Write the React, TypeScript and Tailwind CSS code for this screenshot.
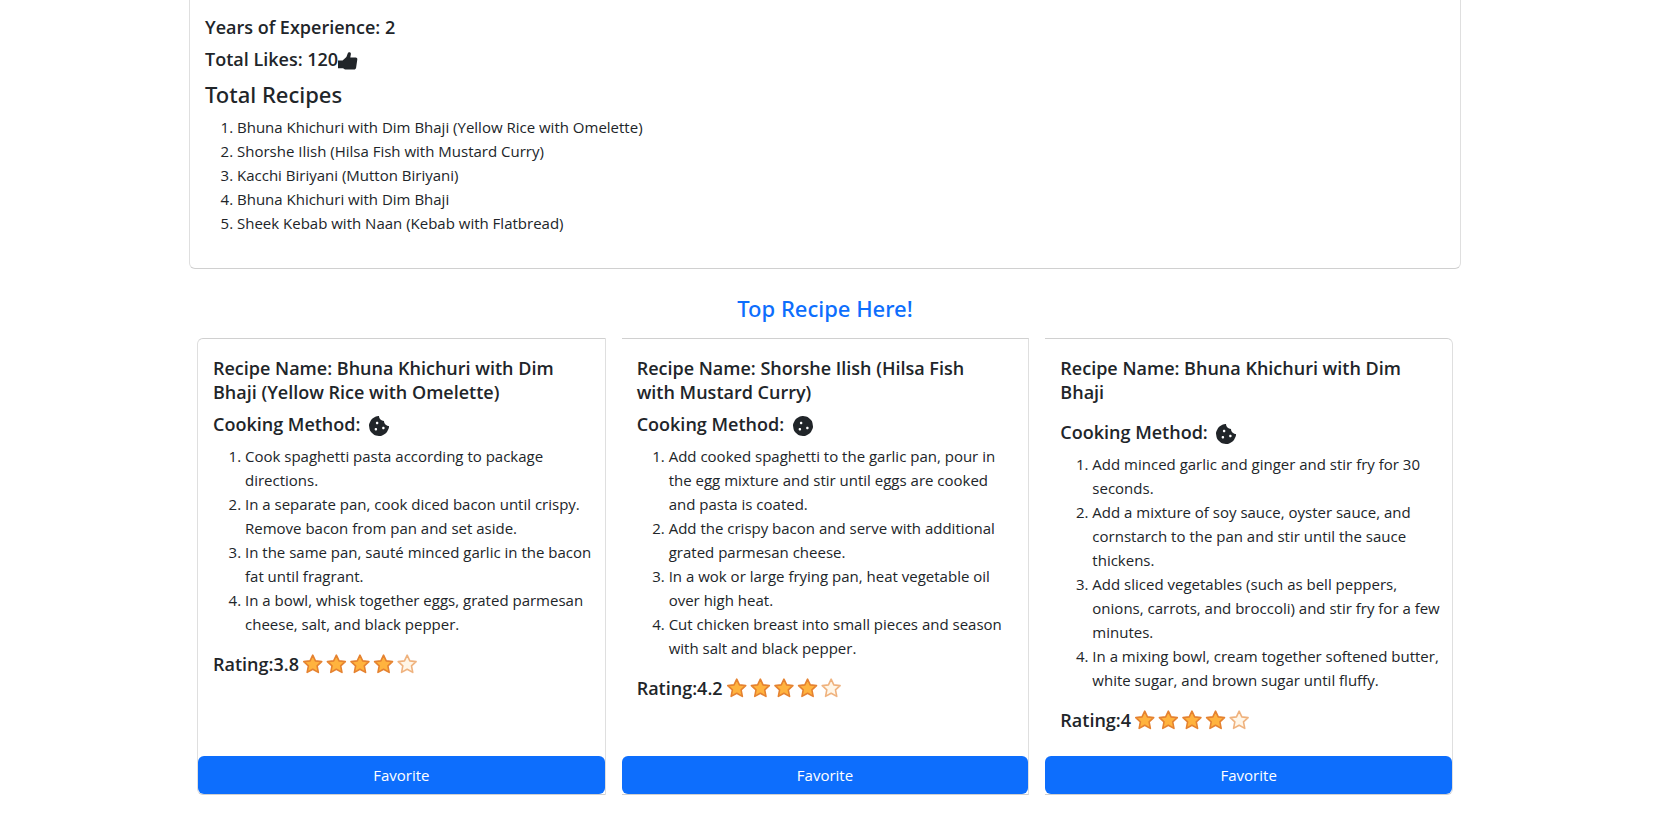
import { Fragment } from "react";
import { FaCookie, FaCookieBite } from "react-icons/fa";

type Recipe = {
  name: string[];
  icon: "bite" | "whole";
  steps: string[][];
  rating: string;
  short?: boolean;
};

const totalRecipes = [
  "Bhuna Khichuri with Dim Bhaji (Yellow Rice with Omelette)",
  "Shorshe Ilish (Hilsa Fish with Mustard Curry)",
  "Kacchi Biriyani (Mutton Biriyani)",
  "Bhuna Khichuri with Dim Bhaji",
  "Sheek Kebab with Naan (Kebab with Flatbread)",
];

const recipes: Recipe[] = [
  {
    name: ["Recipe Name: Bhuna Khichuri with Dim", "Bhaji (Yellow Rice with Omelette)"],
    icon: "bite",
    steps: [
      ["Cook spaghetti pasta according to package", "directions."],
      ["In a separate pan, cook diced bacon until crispy.", "Remove bacon from pan and set aside."],
      ["In the same pan, sauté minced garlic in the bacon", "fat until fragrant."],
      ["In a bowl, whisk together eggs, grated parmesan", "cheese, salt, and black pepper."],
    ],
    rating: "3.8",
  },
  {
    name: ["Recipe Name: Shorshe Ilish (Hilsa Fish", "with Mustard Curry)"],
    icon: "whole",
    steps: [
      ["Add cooked spaghetti to the garlic pan, pour in", "the egg mixture and stir until eggs are cooked", "and pasta is coated."],
      ["Add the crispy bacon and serve with additional", "grated parmesan cheese."],
      ["In a wok or large frying pan, heat vegetable oil", "over high heat."],
      ["Cut chicken breast into small pieces and season", "with salt and black pepper."],
    ],
    rating: "4.2",
  },
  {
    name: ["Recipe Name: Bhuna Khichuri with Dim", "Bhaji"],
    icon: "bite",
    short: true,
    steps: [
      ["Add minced garlic and ginger and stir fry for 30", "seconds."],
      ["Add a mixture of soy sauce, oyster sauce, and", "cornstarch to the pan and stir until the sauce", "thickens."],
      ["Add sliced vegetables (such as bell peppers,", "onions, carrots, and broccoli) and stir fry for a few", "minutes."],
      ["In a mixing bowl, cream together softened butter,", "white sugar, and brown sugar until fluffy."],
    ],
    rating: "4",
  },
];

function Lines({ lines }: { lines: string[] }) {
  return (
    <>
      {lines.map((line, i) => (
        <Fragment key={line}>
          {i > 0 && <br />}
          {line}
        </Fragment>
      ))}
    </>
  );
}

function ThumbIcon() {
  return (
    <svg viewBox="0 0 20 18" className="inline-block h-[18px] w-5 align-middle" fill="currentColor" aria-hidden="true">
      <path d="M0 8.4h4.6L8.4 5l1.3-3.4C10.1.5 10.9 0 11.7.2c1 .2 1.3 1 1.2 1.900l-.6 3.500h5.300c1.200 0 1.900.9 1.700 2l-1.200 8.200c-.2 1.100-1 1.800-2.100 1.800H8.200c-1.200 0-2.200-.5-3.100-1.300H0z" />
    </svg>
  );
}

const starOffsets = [0, 23.6, 47.2, 70.8, 94.4];

function Stars({ filled }: { filled: number }) {
  return (
    <svg viewBox="0 0 115 20" className="ml-1 h-5 w-[115px]" role="img" aria-label={`${filled} of 5 stars`}>
      {starOffsets.map((x, i) => (
        <path
          key={x}
          transform={`translate(${x} 0)`}
          d="M9.75 1.100l2.700 5.750 6.250.75-4.600 4.350 1.250 6.400-5.600-3.150-5.600 3.150 1.250-6.400L.8 7.600l6.250-.75z"
          fill="#ffb33e"
          fillOpacity={i < filled ? 1 : 0.12}
          stroke="#e58230"
          strokeOpacity={i < filled ? 1 : 0.6}
          strokeWidth="1.6"
          strokeLinejoin="round"
        />
      ))}
    </svg>
  );
}

const edges = ["rounded-l-md border-l", "", "rounded-r-md"];

function RecipeCard({ recipe, edge }: { recipe: Recipe; edge: string }) {
  const Cookie = recipe.icon === "bite" ? FaCookieBite : FaCookie;
  return (
    <article className={`flex min-w-0 flex-1 flex-col border-y border-r border-x-[#dfdfdf] border-y-[#d0d0d0] ${edge}`}>
      <div className="flex-1 px-[15px] pb-6 pt-[17px]">
        <h5 className={`text-lg leading-6 font-semibold whitespace-nowrap ${recipe.short ? "mb-4" : "mb-2"}`}>
          <Lines lines={recipe.name} />
        </h5>
        <h5 className="mb-2 h-6 text-lg leading-6 font-semibold">
          Cooking Method: <Cookie className="ml-1 inline-block size-5 align-middle" />
        </h5>
        <ol className="mb-4 list-decimal pl-8">
          {recipe.steps.map((step) => (
            <li key={step[0]} className="whitespace-nowrap">
              <Lines lines={step} />
            </li>
          ))}
        </ol>
        <h5 className="flex items-center text-lg leading-6 font-semibold">
          Rating:{recipe.rating}
          <Stars filled={4} />
        </h5>
      </div>
      <button type="button" className="h-[38px] w-full rounded-md bg-[#0d6efd] text-white">
        Favorite
      </button>
    </article>
  );
}

export default function App() {
  return (
    <main className="bg-white pr-[27px] font-['Open_Sans','Noto_Sans',sans-serif] text-[15px] leading-6 text-[#212529]">
      <div className="mx-auto max-w-[1272px]">
        <section className="rounded-b-md border-x border-b border-x-[#dfdfdf] border-b-[#d0d0d0] px-[15px] pb-[17px] pt-[15px]">
          <h5 className="mb-2 text-lg leading-6 font-semibold">Years of Experience: 2</h5>
          <h5 className="mb-2 h-6 text-lg leading-6 font-semibold">
            Total Likes: 120
            <ThumbIcon />
          </h5>
          <h4 className="mb-1.5 font-['Noto_Sans','Open_Sans',sans-serif] text-[22px] leading-[30px] font-medium">Total Recipes</h4>
          <ol className="mb-4 list-decimal pl-8">
            {totalRecipes.map((name) => (
              <li key={name}>{name}</li>
            ))}
          </ol>
        </section>
        <h4 className="mb-[15px] mt-6 text-center font-['Noto_Sans','Open_Sans',sans-serif] text-[22px] leading-[30px] font-medium text-[#0d6efd]">
          Top Recipe Here!
        </h4>
        <section className="mx-2 flex gap-4">
          {recipes.map((recipe, i) => (
            <RecipeCard key={recipe.rating} recipe={recipe} edge={edges[i]} />
          ))}
        </section>
      </div>
    </main>
  );
}
